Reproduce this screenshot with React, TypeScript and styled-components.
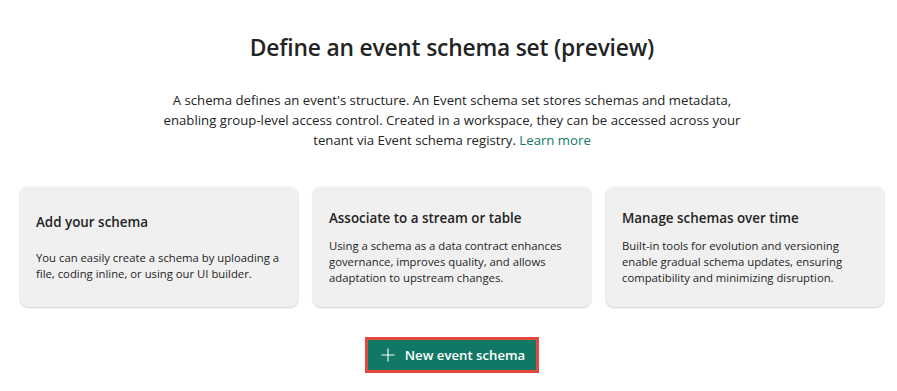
import React from 'react';
import styled, { createGlobalStyle } from 'styled-components';

const GlobalStyle = createGlobalStyle`
  html, body {
    margin: 0;
    padding: 0;
    background: #ffffff;
  }
  body {
    font-family: "Open Sans", "Noto Sans", "Liberation Sans", sans-serif;
    color: #242424;
  }
`;

const Page = styled.div`
  box-sizing: border-box;
  width: 897px;
  height: 391px;
  padding: 32px 13px 0 20px;
  display: flex;
  flex-direction: column;
  align-items: center;
  background: #ffffff;
`;

const Title = styled.h1`
  margin: 0;
  font-size: 22.8px;
  line-height: 32px;
  font-weight: 600;
  letter-spacing: -0.2px;
  color: #242424;
`;

const Description = styled.p`
  margin: 26px 0 0;
  max-width: 600px;
  font-size: 13.2px;
  line-height: 20px;
  text-align: center;
  color: #242424;
`;

const LearnMore = styled.a`
  color: #117865;
  text-decoration: none;
`;

const CardRow = styled.div`
  align-self: stretch;
  margin-top: 37px;
  display: grid;
  grid-template-columns: repeat(3, 1fr);
  gap: 15px;
`;

const Card = styled.div<{ $gap: number }>`
  box-sizing: border-box;
  height: 120px;
  padding: 0 16px;
  border-radius: 8px;
  background: #f0f0f0;
  box-shadow: 0 1px 2px rgba(0, 0, 0, 0.14), 0 0 2px rgba(0, 0, 0, 0.12);
  display: flex;
  flex-direction: column;
  justify-content: center;
  gap: ${p => p.$gap}px;
`;

const CardTitle = styled.div`
  font-size: 13.4px;
  line-height: 20px;
  font-weight: 600;
  color: #242424;
`;

const CardBody = styled.div`
  font-size: 11.3px;
  line-height: 16px;
  color: #242424;
`;

const ButtonFrame = styled.div`
  margin-top: 30px;
  border: 3px solid #e5483f;
  display: flex;
`;

const PrimaryButton = styled.button`
  display: flex;
  align-items: center;
  gap: 10px;
  height: 30px;
  padding: 0 11px 0 13px;
  border: none;
  border-radius: 0;
  background: #117865;
  color: #ffffff;
  font-family: inherit;
  font-size: 13.2px;
  font-weight: 600;
  cursor: pointer;
`;

const cards = [
  {
    title: 'Add your schema',
    body: 'You can easily create a schema by uploading a file, coding inline, or using our UI builder.',
    gap: 18,
  },
  {
    title: 'Associate to a stream or table',
    body: 'Using a schema as a data contract enhances governance, improves quality, and allows adaptation to upstream changes.',
    gap: 10,
  },
  {
    title: 'Manage schemas over time',
    body: 'Built-in tools for evolution and versioning enable gradual schema updates, ensuring compatibility and minimizing disruption.',
    gap: 10,
  },
];

const PlusIcon = () => (
  <svg width="14" height="14" viewBox="0 0 14 14" fill="none">
    <path d="M7 0.5V13.5M0.5 7H13.5" stroke="#ffffff" strokeWidth="1.1" />
  </svg>
);

export default function App() {
  return (
    <>
      <GlobalStyle />
      <Page>
        <Title>Define an event schema set (preview)</Title>
        <Description>
          A schema defines an event's structure. An Event schema set stores schemas and metadata,
          enabling group-level access control. Created in a workspace, they can be accessed across your
          tenant via Event schema registry. <LearnMore href="#">Learn more</LearnMore>
        </Description>
        <CardRow>
          {cards.map(c => (
            <Card key={c.title} $gap={c.gap}>
              <CardTitle>{c.title}</CardTitle>
              <CardBody>{c.body}</CardBody>
            </Card>
          ))}
        </CardRow>
        <ButtonFrame>
          <PrimaryButton>
            <PlusIcon />
            New event schema
          </PrimaryButton>
        </ButtonFrame>
      </Page>
    </>
  );
}
